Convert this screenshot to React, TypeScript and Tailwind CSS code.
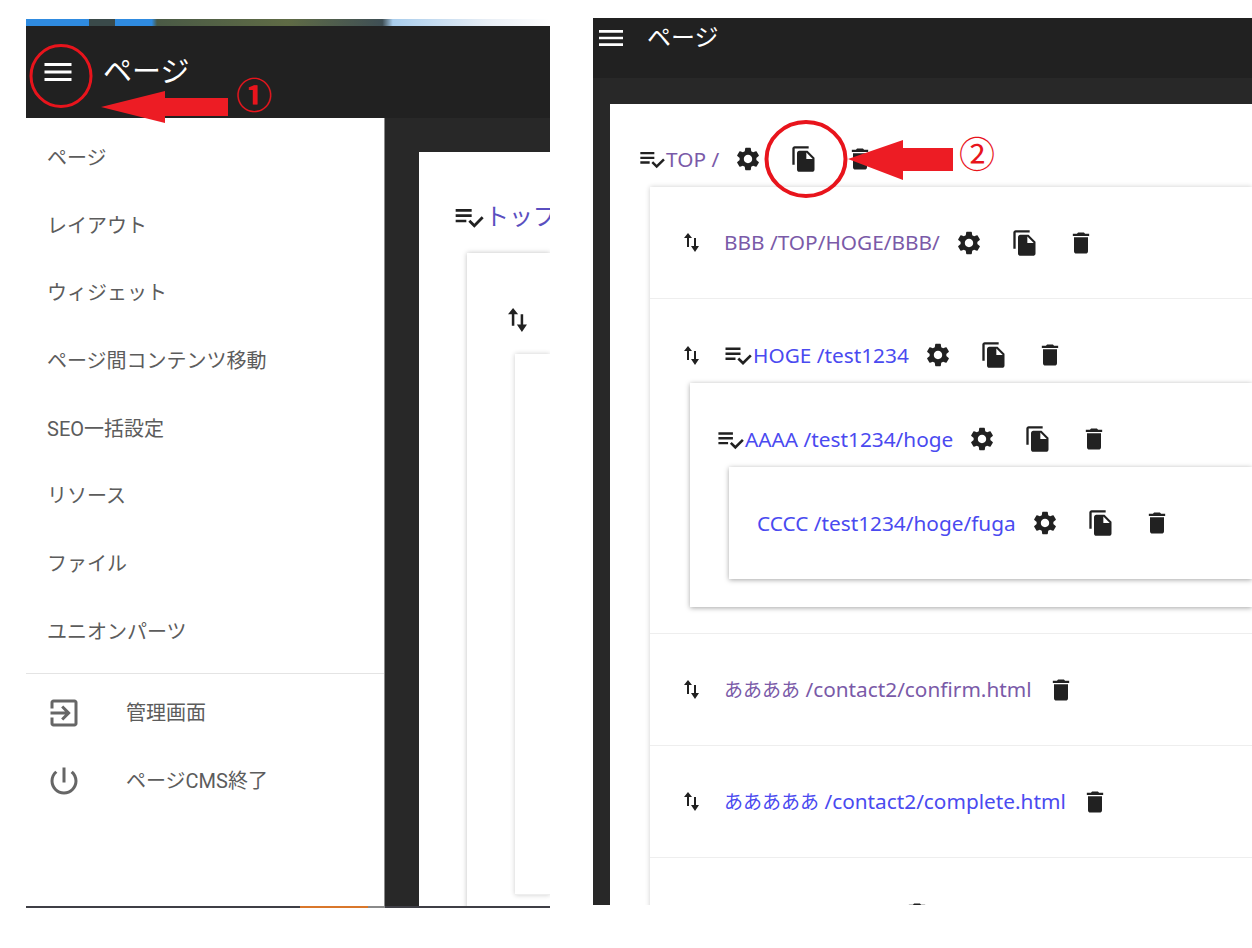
import type { ReactNode } from 'react';

const FONT = "font-['Roboto','Noto_Sans_CJK_JP',sans-serif]";

const ICONS = {
  menu: 'M3 18h18v-2H3v2zm0-5h18v-2H3v2zm0-7v2h18V6H3z',
  gear: 'M19.14 12.94c.04-.3.06-.61.06-.94 0-.32-.02-.64-.07-.94l2.03-1.58c.18-.14.23-.41.12-.61l-1.92-3.32c-.12-.22-.37-.29-.59-.22l-2.39.96c-.5-.38-1.03-.7-1.62-.94l-.36-2.54c-.04-.24-.24-.41-.48-.41h-3.84c-.24 0-.43.17-.47.41l-.36 2.54c-.59.24-1.13.57-1.62.94l-2.39-.96c-.22-.08-.47 0-.59.22L2.74 8.87c-.12.21-.08.47.12.61l2.03 1.58c-.05.3-.09.63-.09.94s.02.64.07.94l-2.03 1.58c-.18.14-.23.41-.12.61l1.92 3.32c.12.22.37.29.59.22l2.39-.96c.5.38 1.03.7 1.62.94l.36 2.54c.05.24.24.41.48.41h3.84c.24 0 .44-.17.47-.41l.36-2.54c.59-.24 1.13-.56 1.62-.94l2.39.96c.22.08.47 0 .59-.22l1.92-3.32c.12-.22.07-.47-.12-.61l-2.01-1.58zM12 15.6c-1.98 0-3.6-1.62-3.6-3.6s1.62-3.6 3.6-3.6 3.6 1.62 3.6 3.6-1.62 3.6-3.6 3.6z',
  copy: 'M16 1H4c-1.1 0-2 .9-2 2v14h2V3h12V1zm-1 4l6 6v10c0 1.1-.9 2-2 2H7.99C6.89 23 6 22.1 6 21l.01-14c0-1.1.89-2 1.99-2h7zm-1 7h5.5L14 6.5V12z',
  trash: 'M6 19c0 1.1.9 2 2 2h8c1.1 0 2-.9 2-2V7H6v12zM19 4h-3.5l-1-1h-5l-1 1H5v2h14V4z',
  check: 'M14 10H2v2h12v-2zm0-4H2v2h12V6zM2 16h8v-2H2v2zm19.5-4.5L23 13l-6.99 7-4.51-4.5L13 14l3.01 3 5.49-5.5z',
  exit: 'M10.09 15.59L11.5 17l5-5-5-5-1.41 1.41L12.67 11H3v2h9.67l-2.58 2.59zM19 3H5c-1.11 0-2 .9-2 2v4h2V5h14v14H5v-4H3v4c0 1.1.89 2 2 2h14c1.1 0 2-.9 2-2V5c0-1.1-.9-2-2-2z',
  power: 'M13 3h-2v10h2V3zm4.83 2.17l-1.42 1.42C17.99 7.86 19 9.81 19 12c0 3.87-3.13 7-7 7s-7-3.13-7-7c0-2.19 1.01-4.14 2.58-5.42L6.17 5.17C4.23 6.82 3 9.26 3 12c0 4.97 4.03 9 9 9s9-4.03 9-9c0-2.74-1.23-5.18-3.17-6.83z',
};

function Icon({ name, className }: { name: keyof typeof ICONS; className: string }) {
  return (
    <svg viewBox="0 0 24 24" fill="currentColor" className={`shrink-0 ${className}`}>
      <path d={ICONS[name]} />
    </svg>
  );
}

function SortIcon({ className }: { className: string }) {
  return (
    <svg viewBox="0 0 15 19" fill="currentColor" className={`shrink-0 ${className}`}>
      <path d="M4 0L0 5h3v9h2V5h3zM10 5v8H7l4 6 4-6h-3V5z" />
    </svg>
  );
}

function Actions({ settings = true, copy = true }: { settings?: boolean; copy?: boolean }) {
  return (
    <div className="flex items-center gap-[28px] ml-[15px] text-[#212121]">
      {settings && <Icon name="gear" className="w-[28px] h-[28px]" />}
      {copy && <Icon name="copy" className="w-[28px] h-[28px]" />}
      <Icon name="trash" className="w-[28px] h-[28px]" />
    </div>
  );
}

function PageLink({ children, visited }: { children: ReactNode; visited?: boolean }) {
  return (
    <span className={`font-['Noto_Sans','Noto_Sans_CJK_JP',sans-serif] text-[20.8px] leading-none whitespace-nowrap ${visited ? 'text-[#7a5aa8]' : 'text-[#4a4af0]'}`}>
      {children}
    </span>
  );
}

function Row({ label, visited, settings, copy, last }: { label?: ReactNode; visited?: boolean; settings?: boolean; copy?: boolean; last?: boolean }) {
  return (
    <div className={`flex items-center h-[112px] pl-[34px] ${last ? '' : 'border-b border-[#eeeeee]'}`}>
      <SortIcon className="w-[15px] h-[19px] mr-[25px] text-[#212121]" />
      {label ? <PageLink visited={visited}>{label}</PageLink> : <div className="w-[164px]" />}
      <Actions settings={settings} copy={copy} />
    </div>
  );
}

const NAV = ['ページ', 'レイアウト', 'ウィジェット', 'ページ間コンテンツ移動', 'SEO一括設定', 'リソース', 'ファイル', 'ユニオンパーツ'];

function LeftPanel() {
  return (
    <div className="w-[524px] h-[889px] flex flex-col overflow-hidden">
      <div className="h-[7px] shrink-0 bg-[linear-gradient(90deg,#2f8be0_0%,#2f8be0_12%,#3a4a4a_12%,#3a4a4a_17%,#2f8be0_17%,#2f8be0_24%,#4a5a45_25%,#5f6b45_50%,#3f4f55_68%,#a9cdec_70%,#e8eef5_88%,#ffffff_100%)]" />
      <header className="h-[92px] shrink-0 bg-[#212121] flex items-center pl-[14px] text-white">
        <Icon name="menu" className="w-[36px] h-[36px]" />
        <span className="ml-[27px] text-[29px] leading-none">ページ</span>
      </header>
      <div className="flex-1 min-h-0 flex bg-[#282828]">
        <nav className="w-[359px] shrink-0 bg-white border-r border-[#8a8a8a] text-[#5c5c5c] text-[20px]">
          <ul className="pt-[6px] pb-[7px] border-b border-[#e4e4e4]">
            {NAV.map((item) => (
              <li key={item} className="h-[67.7px] flex items-center pl-[21px] leading-none whitespace-nowrap">{item}</li>
            ))}
          </ul>
          <ul className="pt-[5px]">
            <li className="h-[68px] flex items-center pl-[20px]">
              <Icon name="exit" className="w-[36px] h-[36px] mr-[44px] text-[#666666]" />
              管理画面
            </li>
            <li className="h-[68px] flex items-center pl-[20px]">
              <Icon name="power" className="w-[36px] h-[36px] mr-[44px] text-[#666666]" />
              ページCMS終了
            </li>
          </ul>
        </nav>
        <main className="flex-1 min-w-0 pl-[34px] pt-[34px]">
          <div className="h-full bg-white">
            <div className="h-[101px] flex items-center pl-[34px] pt-[29px]">
              <Icon name="check" className="w-[32px] h-[32px] text-[#212121]" />
              <span className="text-[24px] leading-none whitespace-nowrap text-[#5a4fc0]">トップ</span>
            </div>
            <div className="ml-[48px] h-full bg-white shadow-[0_0_5px_rgba(0,0,0,0.25)]">
              <div className="h-[101px] pl-[41px] pt-[55px]">
                <SortIcon className="w-[19px] h-[24px] text-[#212121]" />
              </div>
              <div className="ml-[48px] h-[541px] bg-white border-b border-[#eeeeee] shadow-[0_0_5px_rgba(0,0,0,0.2)]" />
            </div>
          </div>
        </main>
      </div>
      <div className="h-[2px] shrink-0 flex">
        <div className="w-[274px] bg-[#3f3f46]" />
        <div className="w-[68px] bg-[#d9772b]" />
        <div className="w-[17px] bg-[#8a8a8a]" />
        <div className="flex-1 bg-[#3f3f46]" />
      </div>
    </div>
  );
}

function RightPanel() {
  return (
    <div className="flex-1 min-w-0 mt-[18px] h-[887px] flex flex-col overflow-hidden bg-[#282828]">
      <header className="h-[60px] shrink-0 bg-[#212121] flex items-center pb-[20px] pl-[2px] text-white">
        <Icon name="menu" className="w-[32px] h-[32px]" />
        <span className="ml-[20px] text-[24px] leading-none">ページ</span>
      </header>
      <main className="flex-1 min-h-0 pl-[17px] pt-[26px]">
        <div className="bg-white h-full">
          <div className="h-[83px] pl-[28px] pt-[37px] flex items-start">
            <div className="flex items-center h-[36px]">
              <Icon name="check" className="w-[28px] h-[28px] text-[#212121]" />
              <PageLink visited>TOP /</PageLink>
              <Actions />
            </div>
          </div>
          <div className="ml-[40px] bg-white shadow-[0_0_5px_rgba(0,0,0,0.2)]">
            <Row label="BBB /TOP/HOGE/BBB/" visited />
            <div className="border-b border-[#eeeeee] pb-[26px]">
              <div className="h-[84px] pt-[28px] pl-[34px] flex items-center">
                <SortIcon className="w-[15px] h-[19px] mr-[24px] text-[#212121]" />
                <Icon name="check" className="w-[30px] h-[30px] text-[#212121]" />
                <PageLink>HOGE /test1234</PageLink>
                <Actions />
              </div>
              <div className="ml-[40px] bg-white shadow-[0_1px_5px_rgba(0,0,0,0.35)] pb-[28px]">
                <div className="h-[84px] pt-[28px] pl-[26px] flex items-center">
                  <Icon name="check" className="w-[29px] h-[29px] text-[#212121]" />
                  <PageLink>AAAA /test1234/hoge</PageLink>
                  <Actions />
                </div>
                <div className="ml-[39px] h-[112px] pl-[28px] flex items-center bg-white shadow-[0_1px_5px_rgba(0,0,0,0.35)]">
                  <PageLink>CCCC /test1234/hoge/fuga</PageLink>
                  <Actions />
                </div>
              </div>
            </div>
            <Row label={<><span className="text-[19px]">ああああ</span> /contact2/confirm.html</>} visited settings={false} copy={false} />
            <Row label={<><span className="text-[19px]">あああああ</span> /contact2/complete.html</>} settings={false} copy={false} />
            <Row last settings={false} copy={false} />
          </div>
        </div>
      </main>
    </div>
  );
}

export default function App() {
  return (
    <div className={`relative w-[1252px] h-[948px] bg-white overflow-hidden flex items-start gap-[43px] pl-[26px] pt-[19px] ${FONT}`}>
      <LeftPanel />
      <div className="flex-1 min-w-0 -mt-[19px]">
        <RightPanel />
      </div>
      {/* red annotations drawn over the screenshots */}
      <svg viewBox="0 0 1252 948" className="absolute left-0 top-0 w-[1252px] h-[948px] pointer-events-none">
        <ellipse cx="61" cy="76" rx="30" ry="30.5" fill="none" stroke="#e8141c" strokeWidth="3" />
        <path d="M101 107L165 91V98H228V116H165V123Z" fill="#ed1c24" />
        <ellipse cx="806" cy="159" rx="39.5" ry="37" fill="none" stroke="#e8141c" strokeWidth="4" />
        <path d="M848 159L903 140V148H953V171H903V180Z" fill="#ed1c24" />
      </svg>
      <span className="absolute left-[236px] top-[75px] text-[36px] leading-[44px] font-bold text-[#e8141c]">①</span>
      <span className="absolute left-[959px] top-[134px] text-[36px] leading-[44px] text-[#e8141c]">②</span>
    </div>
  );
}
